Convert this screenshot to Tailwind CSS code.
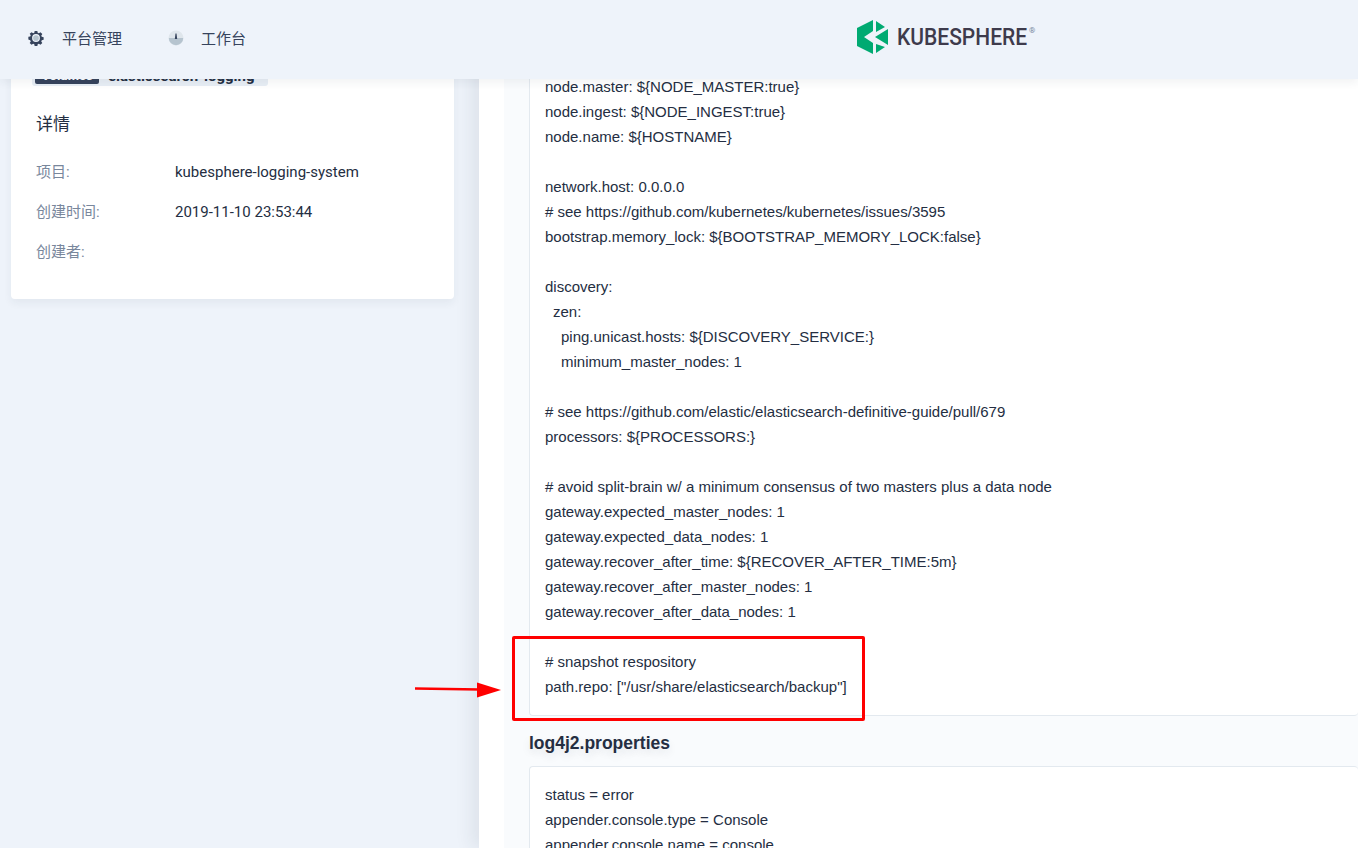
<!DOCTYPE html>
<html lang="zh">

<head>
    <meta charset="UTF-8">
    <title>KubeSphere</title>
    <script src="https://cdn.jsdelivr.net/npm/@tailwindcss/browser@4"></script>
</head>

<body class="relative h-[848px] overflow-hidden bg-[#eef3fa] font-['Roboto','Noto_Sans_CJK_SC',sans-serif] text-[#242e42]">

    <!-- top nav -->
    <header class="absolute inset-x-0 top-0 z-10 flex h-[79px] items-center bg-[#eef3fa] shadow-[0_4px_8px_0_rgba(36,46,66,0.06)]">
        <nav class="-mt-[3px] flex items-center pl-[28px] font-['Noto_Sans_CJK_SC',sans-serif] text-[15px] text-[#36435c]">
            <svg class="h-[16px] w-[16px]" viewBox="0 0 18 18">
                <path fill="#36435c" fill-rule="evenodd" d="M7.500 1h3l.4 2.100 1.300.6L14 2.500l2.100 2.100-1.200 1.800.6 1.300 2.100.4v3l-2.100.4-.6 1.300 1.200 1.800-2.100 2.100-1.800-1.200-1.300.6-.4 2.100h-3l-.4-2.100-1.300-.6-1.800 1.200-2.100-2.100 1.200-1.800-.6-1.300L.4 10.600v-3l2.100-.4.6-1.300-1.200-1.800L4 2.500l1.800 1.200 1.300-.6zM9 4.600a4.400 4.400 0 1 0 0 8.800 4.400 4.400 0 0 0 0-8.800z" />
                <circle cx="9" cy="9" r="3.200" fill="#b6c4cf" />
            </svg>
            <span class="ml-[18px]">平台管理</span>
            <svg class="ml-[46px] h-[16px] w-[16px]" viewBox="0 0 16 16">
                <circle cx="8" cy="8" r="7.500" fill="#dfe6ec" />
                <path fill="#b6c4cf" d="M.8 8a7.200 7.200 0 0 0 14.400 0z" />
                <path fill="#36435c" d="M7.500 3.500h1l.7 5.500H6.800z" />
            </svg>
            <span class="ml-[17px]">工作台</span>
        </nav>
        <div class="absolute left-[857px] top-[20px] flex items-start">
            <svg class="h-[34px] w-[31px]" viewBox="0 0 31 34">
                <path fill="#00aa72" d="M0 8L16 0V11L7 17l9 6V34L0 26z" />
                <path fill="#00aa72" d="M19 1l9 6-9 5zM31 9V25L18 17zM19 24l9 3-9 6z" />
            </svg>
            <span class="ml-[9px] mt-[3px] origin-left scale-x-[0.875] font-['Roboto'] text-[24px]/[28px] font-medium whitespace-nowrap text-[#3e3b4c]">KUBESPHERE</span>
            <span class="absolute left-[172px] top-[5px] text-[8px] text-[#79879c]">®</span>
        </div>
    </header>

    <main class="flex">
        <!-- left column -->
        <aside class="w-[479px] shrink-0 pt-[40px] pl-[11px]">
            <div class="h-[259px] w-[443px] rounded-[4px] bg-white pr-[24px] pl-[21px] shadow-[0_4px_8px_0_rgba(36,46,66,0.06)]">
                <div class="flex h-[46px] items-end">
                    <div class="flex h-[22px] w-[236px] rounded-[3px] bg-[#e8eef5] pl-[3px] text-[15px]/[24px] font-bold">
                        <span class="h-[20px] w-[64px] overflow-hidden rounded-[2px] bg-[#36435c] text-center text-[13px] text-white">Volumes</span>
                        <span class="ml-[9px]">elasticsearch-logging</span>
                    </div>
                </div>
                <h3 class="mt-[26px] px-[4px] text-[17px]/[24px] text-[#242e42]">详情</h3>
                <dl class="mt-[26px] px-[4px] text-[15px]/[20px]">
                    <div class="flex h-[40px]">
                        <dt class="w-[139px] text-[#79879c]">项目:</dt>
                        <dd>kubesphere-logging-system</dd>
                    </div>
                    <div class="flex h-[40px]">
                        <dt class="w-[139px] text-[#79879c]">创建时间:</dt>
                        <dd>2019-11-10 23:53:44</dd>
                    </div>
                    <div class="flex h-[40px]">
                        <dt class="w-[139px] text-[#79879c]">创建者:</dt>
                        <dd></dd>
                    </div>
                </dl>
            </div>
        </aside>

        <!-- right panel -->
        <section class="h-[848px] flex-1 bg-white pl-[25px] shadow-[-8px_0_16px_0_rgba(36,46,66,0.08)]">
            <div class="h-full bg-[#f9fbfd] pl-[25px] font-['Liberation_Sans',sans-serif] text-[15px]/[25px]">
                <div class="rounded-b-[4px] border border-t-0 border-r-0 border-[#e3e9ef] bg-white px-[15px] pt-[74px] pb-[16px]">
                    <p>node.master: ${NODE_MASTER:true}</p>
                    <p>node.ingest: ${NODE_INGEST:true}</p>
                    <p>node.name: ${HOSTNAME}</p>
                    <p>&nbsp;</p>
                    <p>network.host: 0.0.0.0</p>
                    <p># see https://github.com/kubernetes/kubernetes/issues/3595</p>
                    <p>bootstrap.memory_lock: ${BOOTSTRAP_MEMORY_LOCK:false}</p>
                    <p>&nbsp;</p>
                    <p>discovery:</p>
                    <p class="pl-[8px]">zen:</p>
                    <p class="pl-[16px]">ping.unicast.hosts: ${DISCOVERY_SERVICE:}</p>
                    <p class="pl-[16px]">minimum_master_nodes: 1</p>
                    <p>&nbsp;</p>
                    <p># see https://github.com/elastic/elasticsearch-definitive-guide/pull/679</p>
                    <p>processors: ${PROCESSORS:}</p>
                    <p>&nbsp;</p>
                    <p># avoid split-brain w/ a minimum consensus of two masters plus a data node</p>
                    <p>gateway.expected_master_nodes: 1</p>
                    <p>gateway.expected_data_nodes: 1</p>
                    <p>gateway.recover_after_time: ${RECOVER_AFTER_TIME:5m}</p>
                    <p>gateway.recover_after_master_nodes: 1</p>
                    <p>gateway.recover_after_data_nodes: 1</p>
                    <p>&nbsp;</p>
                    <p># snapshot respository</p>
                    <p>path.repo: ["/usr/share/elasticsearch/backup"]</p>
                </div>
                <h3 class="mt-[15px] text-[17.500px]/[24px] font-bold [text-shadow:0_4px_8px_rgba(36,46,66,0.1)]">log4j2.properties</h3>
                <div class="mt-[11px] rounded-t-[4px] border border-r-0 border-b-0 border-[#e3e9ef] bg-white px-[15px] pt-[15px]">
                    <p>status = error</p>
                    <p>appender.console.type = Console</p>
                    <p>appender.console.name = console</p>
                </div>
            </div>
        </section>
    </main>

    <!-- red annotation drawn over the screenshot -->
    <div class="absolute left-[512px] top-[636px] h-[85px] w-[353px] rounded-[2px] border-[3px] border-[#ff0000]"></div>
    <svg class="absolute left-[414px] top-[680px]" width="88" height="20" viewBox="0 0 88 20">
        <path d="M1 8.500L66 9.500" stroke="#ff0000" stroke-width="2.500" fill="none" />
        <path fill="#ff0000" d="M63 2.500L87 10 63 17.500z" />
    </svg>
</body>

</html>
